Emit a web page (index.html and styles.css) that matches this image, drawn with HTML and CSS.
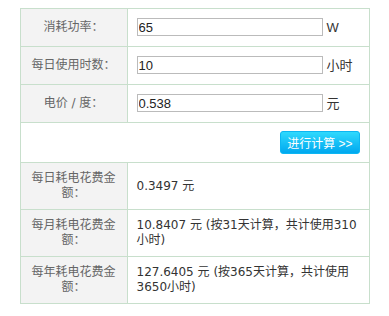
FILE: index.html
```html
<!DOCTYPE html>
<html lang="zh-CN">
<head>
    <meta charset="UTF-8">
    <meta name="viewport" content="width=device-width, initial-scale=1.0">
    <title>电费计算器</title>
    <link rel="stylesheet" href="styles.css">
</head>
<body>
    <table class="calc">
        <colgroup>
            <col class="col-label">
            <col>
        </colgroup>
        <tr class="row-input">
            <td class="label">消耗功率：</td>
            <td class="value"><div class="field"><input type="text" value="65"><span class="unit">W</span></div></td>
        </tr>
        <tr class="row-input">
            <td class="label">每日使用时数：</td>
            <td class="value"><div class="field"><input type="text" value="10"><span class="unit">小时</span></div></td>
        </tr>
        <tr class="row-input">
            <td class="label">电价 / 度：</td>
            <td class="value"><div class="field"><input type="text" value="0.538"><span class="unit">元</span></div></td>
        </tr>
        <tr>
            <td colspan="2" class="actions"><button id="calc-button">进行计算 &gt;&gt;</button></td>
        </tr>
        <tr class="row-result">
            <td class="label">每日耗电花费金额：</td>
            <td class="value">0.3497 元</td>
        </tr>
        <tr class="row-result">
            <td class="label">每月耗电花费金额：</td>
            <td class="value">10.8407 元 (按31天计算，共计使用310小时)</td>
        </tr>
        <tr class="row-result">
            <td class="label">每年耗电花费金额：</td>
            <td class="value">127.6405 元 (按365天计算，共计使用3650小时)</td>
        </tr>
    </table>
</body>
</html>
```

FILE: styles.css
```css
body {
    margin: 8px;
    background: #fff;
    font-family: "DejaVu Sans", "Noto Sans CJK SC", sans-serif;
    font-size: 12px;
}

.calc {
    width: 350px;
    margin: 0 auto;
    border-collapse: collapse;
    table-layout: fixed;
}
.col-label {
    width: 107px;
}
.calc td {
    border: 1px solid #c8dfcc;
    padding: 8px 9px;
    line-height: 15px;
    vertical-align: middle;
}
.label {
    background-color: #f3f3f3;
    color: #666;
    text-align: center;
}
.value {
    color: #333;
}

.row-input td {
    padding: 8px 9px 9px;
}
.field {
    display: flex;
    align-items: center;
    height: 20px;
}
.field input {
    width: 186px;
    height: 18px;
    box-sizing: border-box;
    border: 1px solid #bbb;
    padding: 0 1px;
    margin: 0 4px 0 0;
    font-family: "Liberation Sans", Arial, sans-serif;
    font-size: 13px;
    color: #222;
    outline: none;
}
.unit {
    font-family: "Liberation Sans", "Noto Sans CJK SC", sans-serif;
    font-size: 13px;
    color: #333;
}

.actions {
    text-align: right;
}
#calc-button {
    height: 23px;
    padding: 0 6px;
    border: 1px solid #0cb6f2;
    border-radius: 3px;
    background: linear-gradient(#2fd9fd, #00a8ef);
    color: #fff;
    font-family: "Liberation Sans", "Noto Sans CJK SC", sans-serif;
    font-size: 12px;
    vertical-align: middle;
    cursor: pointer;
}
```
